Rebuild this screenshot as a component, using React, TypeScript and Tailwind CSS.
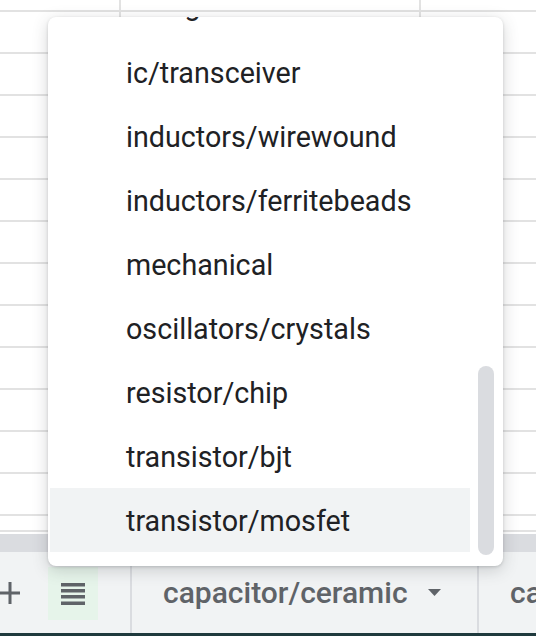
import React from 'react';

const items = [
  'ic/regulator',
  'ic/transceiver',
  'inductors/wirewound',
  'inductors/ferritebeads',
  'mechanical',
  'oscillators/crystals',
  'resistor/chip',
  'transistor/bjt',
  'transistor/mosfet',
];

const GridRow: React.FC<{ h: string; top?: boolean }> = ({ h, top = true }) => (
  <div className={`flex ${h} ${top ? 'border-t-2 border-[#e2e2e2]' : ''}`}>
    <div className="w-[121px] shrink-0 border-r-2 border-[#e2e2e2]" />
    <div className="w-[300px] shrink-0 border-r-2 border-[#e2e2e2]" />
    <div className="flex-1" />
  </div>
);

const App: React.FC = () => {
  const hovered = 'transistor/mosfet';

  return (
    <div className="relative w-[536px] h-[636px] overflow-hidden bg-white font-['Roboto',sans-serif]">
      {/* sheet grid */}
      <div className="flex flex-col h-[552px]">
        <GridRow h="h-[10px]" top={false} />
        {Array.from({ length: 12 }).map((_, i) => (
          <GridRow key={i} h="h-[42px]" />
        ))}
        <GridRow h="h-[16px]" />
        <div className="h-[4px] border-t-2 border-[#e2e2e2]" />
        <div className="h-[18px] bg-[#dadce0]" />
      </div>

      {/* sheet tabs */}
      <div className="flex items-stretch h-[81px] bg-[#f1f3f4]">
        <div className="w-[20px] flex items-center justify-center shrink-0">
          <svg width="20" height="22" viewBox="0 0 20 22">
            <rect x="0" y="9.5" width="20" height="3" fill="#5f6368" />
            <rect x="8.5" y="0" width="3" height="22" fill="#5f6368" />
          </svg>
        </div>
        <div className="ml-[28px] mt-[15px] w-[50px] h-[53px] bg-[#e6f4ea] flex items-center justify-center">
          <svg width="24" height="22" viewBox="0 0 24 22">
            <rect x="0" y="0" width="24" height="3.5" fill="#5f6368" />
            <rect x="0" y="6" width="24" height="3.5" fill="#5f6368" />
            <rect x="0" y="12" width="24" height="3.5" fill="#5f6368" />
            <rect x="0" y="18.5" width="24" height="3.5" fill="#5f6368" />
          </svg>
        </div>
        <div className="ml-[32px] border-l-2 border-[#dadce0] w-[347px] shrink-0 flex items-center pl-[31px]">
          <span className="text-[30px] font-medium text-[#5f6368] whitespace-nowrap">capacitor/ceramic</span>
          <svg className="ml-[20px]" width="13" height="7" viewBox="0 0 13 7">
            <path d="M0 0h13L6.5 7z" fill="#5f6368" />
          </svg>
        </div>
        <div className="border-l-2 border-[#dadce0] flex-1 flex items-center pl-[31px] overflow-hidden">
          <span className="text-[30px] font-medium text-[#5f6368] whitespace-nowrap">capacitor/tantalum</span>
        </div>
      </div>
      <div className="h-[3px] bg-[#1f3a3d]" />

      {/* dropdown menu */}
      <div className="absolute left-[48px] top-[17px] w-[455px] h-[549px] bg-white rounded-lg shadow-[0_4px_16px_rgba(60,64,67,0.22),0_1px_3px_rgba(60,64,67,0.2)] flex overflow-hidden">
        <div className="ml-[2px] w-[420px] shrink-0 overflow-hidden">
          <div className="-mt-[41px]">
            {items.map((it, i) => (
              <div
                key={it}
                className={`h-[64px] flex items-center pl-[76px] text-[28.7px] text-[#202124] whitespace-nowrap ${
                  i === 0 ? 'pb-[4px]' : 'pt-[4px]'
                } ${it === hovered ? 'bg-[#f1f3f4]' : ''}`}
              >
                {it}
              </div>
            ))}
          </div>
        </div>
        <div className="ml-[8px] w-[16px]">
          <div className="mt-[349px] h-[189px] rounded-full bg-[#dadce0]" />
        </div>
      </div>
    </div>
  );
};

export default App;
